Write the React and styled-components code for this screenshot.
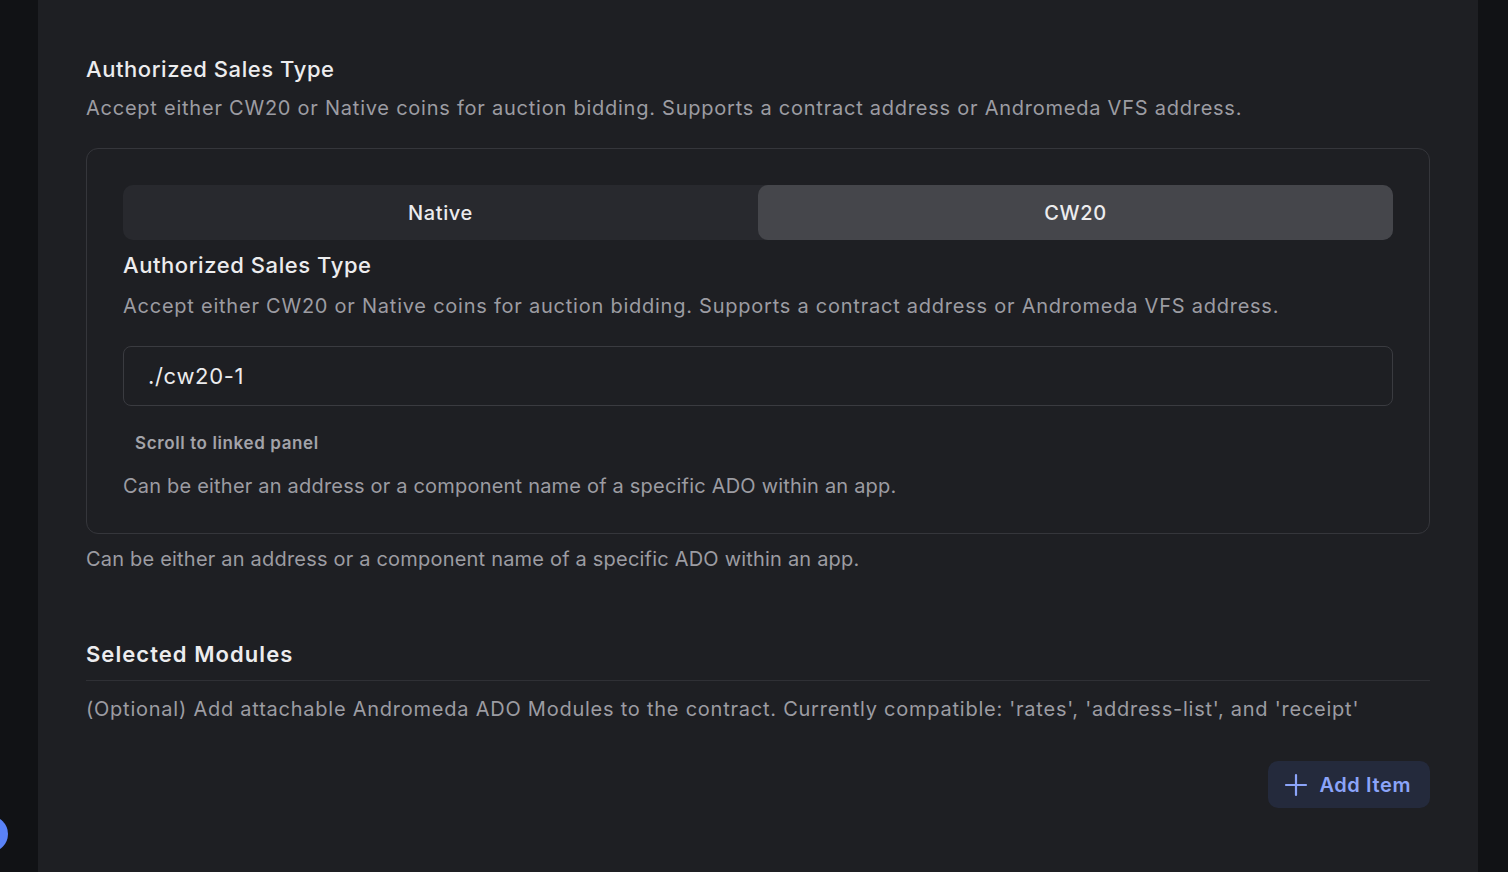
import React, { useState } from 'react';
import styled, { createGlobalStyle } from 'styled-components';

const GlobalStyle = createGlobalStyle`
  html, body {
    margin: 0;
    padding: 0;
    background: #111215;
    font-family: Inter, "Noto Sans", sans-serif;
    overflow: hidden;
  }
`;

const Page = styled.div`
  display: grid;
  grid-template-columns: 38px 1fr 30px;
  height: 872px;
  background: #111215;
`;

const Sidebar = styled.div`
  position: relative;
  background: #111215;
`;

const Dot = styled.div`
  position: absolute;
  left: -28px;
  top: 816px;
  width: 36px;
  height: 36px;
  border-radius: 50%;
  background: #5a82f7;
`;

const Main = styled.main`
  background: #1e1f23;
  padding: 56px 48px 0 48px;
  display: flex;
  flex-direction: column;
`;

const Title = styled.h2`
  margin: 0;
  font-size: 22px;
  font-weight: ${p => (p.$bold ? 600 : 450)};
  letter-spacing: ${p => (p.$bold ? '0.048em' : '0.026em')};
  color: #ececee;
  line-height: 26px;
`;

const Desc = styled.p`
  margin: ${p => p.$mt || '14px'} 0 0 0;
  font-size: 20px;
  line-height: 24px;
  letter-spacing: ${p => (p.$help ? '0.01em' : '0.038em')};
  color: #9c9ca2;
`;

const Card = styled.div`
  margin-top: 28px;
  border: 1px solid #35363b;
  border-radius: 12px;
  padding: 36px 36px 35px 36px;
  display: flex;
  flex-direction: column;
`;

const Tabs = styled.div`
  display: grid;
  grid-template-columns: 1fr 1fr;
  background: #28292e;
  border-radius: 10px;
  height: 55px;
`;

const Tab = styled.button`
  border: none;
  border-radius: 10px;
  background: ${p => (p.$active ? '#45464b' : 'transparent')};
  color: #ececee;
  font-family: inherit;
  font-size: 20px;
  font-weight: 450;
  letter-spacing: 0.03em;
  cursor: pointer;
`;

const InnerTitle = styled(Title)`
  margin-top: 12px;
`;

const Input = styled.input`
  margin-top: 28px;
  height: 60px;
  box-sizing: border-box;
  border: 1px solid #3a3b40;
  border-radius: 8px;
  background: transparent;
  padding: 0 24px;
  font-family: inherit;
  font-size: 22px;
  letter-spacing: 0.03em;
  color: #ececee;
  outline: none;
`;

const LinkLabel = styled.span`
  margin: 26px 0 0 12px;
  font-size: 17px;
  line-height: 22px;
  font-weight: 600;
  letter-spacing: 0.036em;
  color: #a3a3a9;
`;

const SectionHead = styled.div`
  margin-top: 70px;
  padding-bottom: 13px;
  border-bottom: 1px solid #2f3035;
`;

const Actions = styled.div`
  display: flex;
  justify-content: flex-end;
  margin-top: 40px;
`;

const AddButton = styled.button`
  display: flex;
  align-items: center;
  gap: 11px;
  height: 47px;
  padding: 0 19px 0 16px;
  border: none;
  border-radius: 10px;
  background: #242a3c;
  color: #8ba4f9;
  font-family: inherit;
  font-size: 20px;
  font-weight: 600;
  letter-spacing: 0.03em;
  cursor: pointer;
`;

const RightBar = styled.div`
  background: #111215;
`;

export default function App() {
  const [tab, setTab] = useState('cw20');
  return (
    <>
      <GlobalStyle />
      <Page>
        <Sidebar>
          <Dot />
        </Sidebar>
        <Main>
          <Title>Authorized Sales Type</Title>
          <Desc>
            Accept either CW20 or Native coins for auction bidding. Supports a contract address or Andromeda VFS address.
          </Desc>
          <Card>
            <Tabs>
              <Tab $active={tab === 'native'} onClick={() => setTab('native')}>Native</Tab>
              <Tab $active={tab === 'cw20'} onClick={() => setTab('cw20')}>CW20</Tab>
            </Tabs>
            <InnerTitle>Authorized Sales Type</InnerTitle>
            <Desc $mt="16px">
              Accept either CW20 or Native coins for auction bidding. Supports a contract address or Andromeda VFS address.
            </Desc>
            <Input defaultValue="./cw20-1" />
            <LinkLabel>Scroll to linked panel</LinkLabel>
            <Desc $help $mt="20px">Can be either an address or a component name of a specific ADO within an app.</Desc>
          </Card>
          <Desc $help $mt="13px">Can be either an address or a component name of a specific ADO within an app.</Desc>
          <SectionHead>
            <Title $bold>Selected Modules</Title>
          </SectionHead>
          <Desc $mt="16px">
            (Optional) Add attachable Andromeda ADO Modules to the contract. Currently compatible: 'rates', 'address-list', and 'receipt'
          </Desc>
          <Actions>
            <AddButton>
              <svg width="24" height="24" viewBox="0 0 24 24" fill="none" stroke="currentColor" strokeWidth="2.2" strokeLinecap="round">
                <path d="M12 2v20M2 12h20" />
              </svg>
              Add Item
            </AddButton>
          </Actions>
        </Main>
        <RightBar />
      </Page>
    </>
  );
}
